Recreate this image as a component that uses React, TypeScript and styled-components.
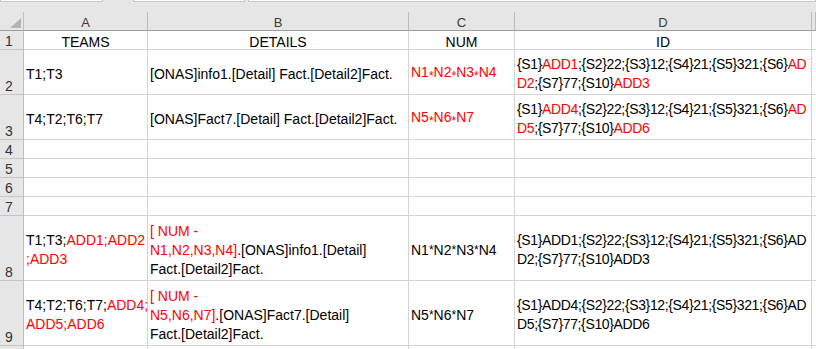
import React from "react";
import styled, { createGlobalStyle } from "styled-components";

const GlobalStyle = createGlobalStyle`
  html, body {
    margin: 0;
    padding: 0;
    background: #ffffff;
  }
  body {
    font-family: "Liberation Sans", Arial, sans-serif;
    font-size: 14px;
  }
`;

const COLUMNS = "24px 124px 261px 106px 297px 1fr";

const Sheet = styled.div`
  width: 816px;
  height: 349px;
  overflow: hidden;
  background: #ffffff;
`;

const TopStrip = styled.div`
  display: flex;
  height: 12px;
  background: #e6e6e6;
`;

const Field = styled.div<{ $w?: number; $ml?: number }>`
  height: 1px;
  flex: ${(p) => (p.$w ? `0 0 ${p.$w}px` : "1 1 auto")};
  margin-left: ${(p) => p.$ml ?? 0}px;
  background: #ffffff;
  border: 1px solid #c6c6c6;
  border-top: none;
`;

const Row = styled.div<{ $h: number }>`
  display: grid;
  grid-template-columns: ${COLUMNS};
  height: ${(p) => p.$h}px;
`;

const Corner = styled.div`
  display: flex;
  justify-content: flex-end;
  align-items: flex-end;
  padding: 0 2px 2px 0;
  background: #e6e6e6;
  border-right: 1px solid #bfbfbf;
  border-bottom: 1px solid #9e9e9e;
`;

const ColHead = styled.div`
  display: flex;
  align-items: center;
  justify-content: center;
  padding-top: 3px;
  background: #e6e6e6;
  border-right: 1px solid #bcbcbc;
  border-bottom: 1px solid #9e9e9e;
  color: #3a3a3a;
  font-size: 13px;
  line-height: 15px;
`;

const RowHead = styled.div`
  display: flex;
  align-items: flex-end;
  padding-left: 5px;
  background: #e6e6e6;
  border-right: 1px solid #bfbfbf;
  border-bottom: 1px solid #c6c6c6;
  color: #333333;
  line-height: 15px;
`;

const Cell = styled.div<{ $center?: boolean; $tight?: boolean }>`
  display: flex;
  align-items: center;
  justify-content: ${(p) => (p.$center ? "center" : "flex-start")};
  padding: 4px 2px 0 2px;
  border-right: 1px solid #d4d4d4;
  border-bottom: 1px solid #d4d4d4;
  color: #000000;
  line-height: 19px;
  white-space: nowrap;
  overflow: hidden;
  letter-spacing: ${(p) => (p.$tight ? "-0.36px" : "normal")};
`;

const Lines = styled.div``;

const Red = styled.span`
  color: #ff0000;
`;

const Star = styled.span`
  display: inline-block;
  vertical-align: -3px;
  font-size: 12px;
`;

const SelectAll = () => (
  <Corner>
    <svg width="11" height="10" viewBox="0 0 11 10">
      <polygon points="11,0 11,10 0,10" fill="#b4b4b4" />
    </svg>
  </Corner>
);

const Stars: React.FC<{ items: string[] }> = ({ items }) => (
  <>
    {items.map((n, i) => (
      <React.Fragment key={n}>
        {i > 0 && <Star>*</Star>}
        {n}
      </React.Fragment>
    ))}
  </>
);

const EmptyRow: React.FC<{ h: number; label?: string }> = ({ h, label }) => (
  <Row $h={h}>
    <RowHead>{label}</RowHead>
    <Cell />
    <Cell />
    <Cell />
    <Cell />
    <Cell />
  </Row>
);

const App: React.FC = () => {
  return (
    <>
      <GlobalStyle />
      <Sheet>
        <TopStrip>
          <Field $w={101} />
          <Field $w={110} $ml={30} />
          <Field $ml={3} />
        </TopStrip>

        <Row $h={19}>
          <SelectAll />
          <ColHead>A</ColHead>
          <ColHead>B</ColHead>
          <ColHead>C</ColHead>
          <ColHead>D</ColHead>
          <ColHead />
        </Row>

        <Row $h={19}>
          <RowHead>1</RowHead>
          <Cell $center>TEAMS</Cell>
          <Cell $center>DETAILS</Cell>
          <Cell $center>NUM</Cell>
          <Cell $center>ID</Cell>
          <Cell />
        </Row>

        <Row $h={45}>
          <RowHead>2</RowHead>
          <Cell>T1;T3</Cell>
          <Cell>[ONAS]info1.[Detail] Fact.[Detail2]Fact.</Cell>
          <Cell>
            <Red>
              <Stars items={["N1", "N2", "N3", "N4"]} />
            </Red>
          </Cell>
          <Cell $tight>
            <Lines>
              {"{S1}"}
              <Red>ADD1</Red>
              {";{S2}22;{S3}12;{S4}21;{S5}321;{S6}"}
              <Red>AD</Red>
              <br />
              <Red>D2</Red>
              {";{S7}77;{S10}"}
              <Red>ADD3</Red>
            </Lines>
          </Cell>
          <Cell />
        </Row>

        <Row $h={45}>
          <RowHead>3</RowHead>
          <Cell>T4;T2;T6;T7</Cell>
          <Cell>[ONAS]Fact7.[Detail] Fact.[Detail2]Fact.</Cell>
          <Cell>
            <Red>
              <Stars items={["N5", "N6", "N7"]} />
            </Red>
          </Cell>
          <Cell $tight>
            <Lines>
              {"{S1}"}
              <Red>ADD4</Red>
              {";{S2}22;{S3}12;{S4}21;{S5}321;{S6}"}
              <Red>AD</Red>
              <br />
              <Red>D5</Red>
              {";{S7}77;{S10}"}
              <Red>ADD6</Red>
            </Lines>
          </Cell>
          <Cell />
        </Row>

        {["4", "5", "6", "7"].map((n) => (
          <EmptyRow key={n} h={19} label={n} />
        ))}

        <Row $h={65}>
          <RowHead>8</RowHead>
          <Cell>
            <Lines>
              T1;T3;<Red>ADD1;ADD2</Red>
              <br />
              <Red>;ADD3</Red>
            </Lines>
          </Cell>
          <Cell>
            <Lines>
              <Red>[ NUM -</Red>
              <br />
              <Red>N1,N2,N3,N4]</Red>.[ONAS]info1.[Detail]
              <br />
              Fact.[Detail2]Fact.
            </Lines>
          </Cell>
          <Cell>
            <Stars items={["N1", "N2", "N3", "N4"]} />
          </Cell>
          <Cell $tight>
            <Lines>
              {"{S1}ADD1;{S2}22;{S3}12;{S4}21;{S5}321;{S6}AD"}
              <br />
              {"D2;{S7}77;{S10}ADD3"}
            </Lines>
          </Cell>
          <Cell />
        </Row>

        <Row $h={65}>
          <RowHead>9</RowHead>
          <Cell>
            <Lines>
              T4;T2;T6;T7;<Red>ADD4;</Red>
              <br />
              <Red>ADD5;ADD6</Red>
            </Lines>
          </Cell>
          <Cell>
            <Lines>
              <Red>[ NUM -</Red>
              <br />
              <Red>N5,N6,N7]</Red>.[ONAS]Fact7.[Detail]
              <br />
              Fact.[Detail2]Fact.
            </Lines>
          </Cell>
          <Cell>
            <Stars items={["N5", "N6", "N7"]} />
          </Cell>
          <Cell $tight>
            <Lines>
              {"{S1}ADD4;{S2}22;{S3}12;{S4}21;{S5}321;{S6}AD"}
              <br />
              {"D5;{S7}77;{S10}ADD6"}
            </Lines>
          </Cell>
          <Cell />
        </Row>

        <EmptyRow h={20} />
      </Sheet>
    </>
  );
};

export default App;
